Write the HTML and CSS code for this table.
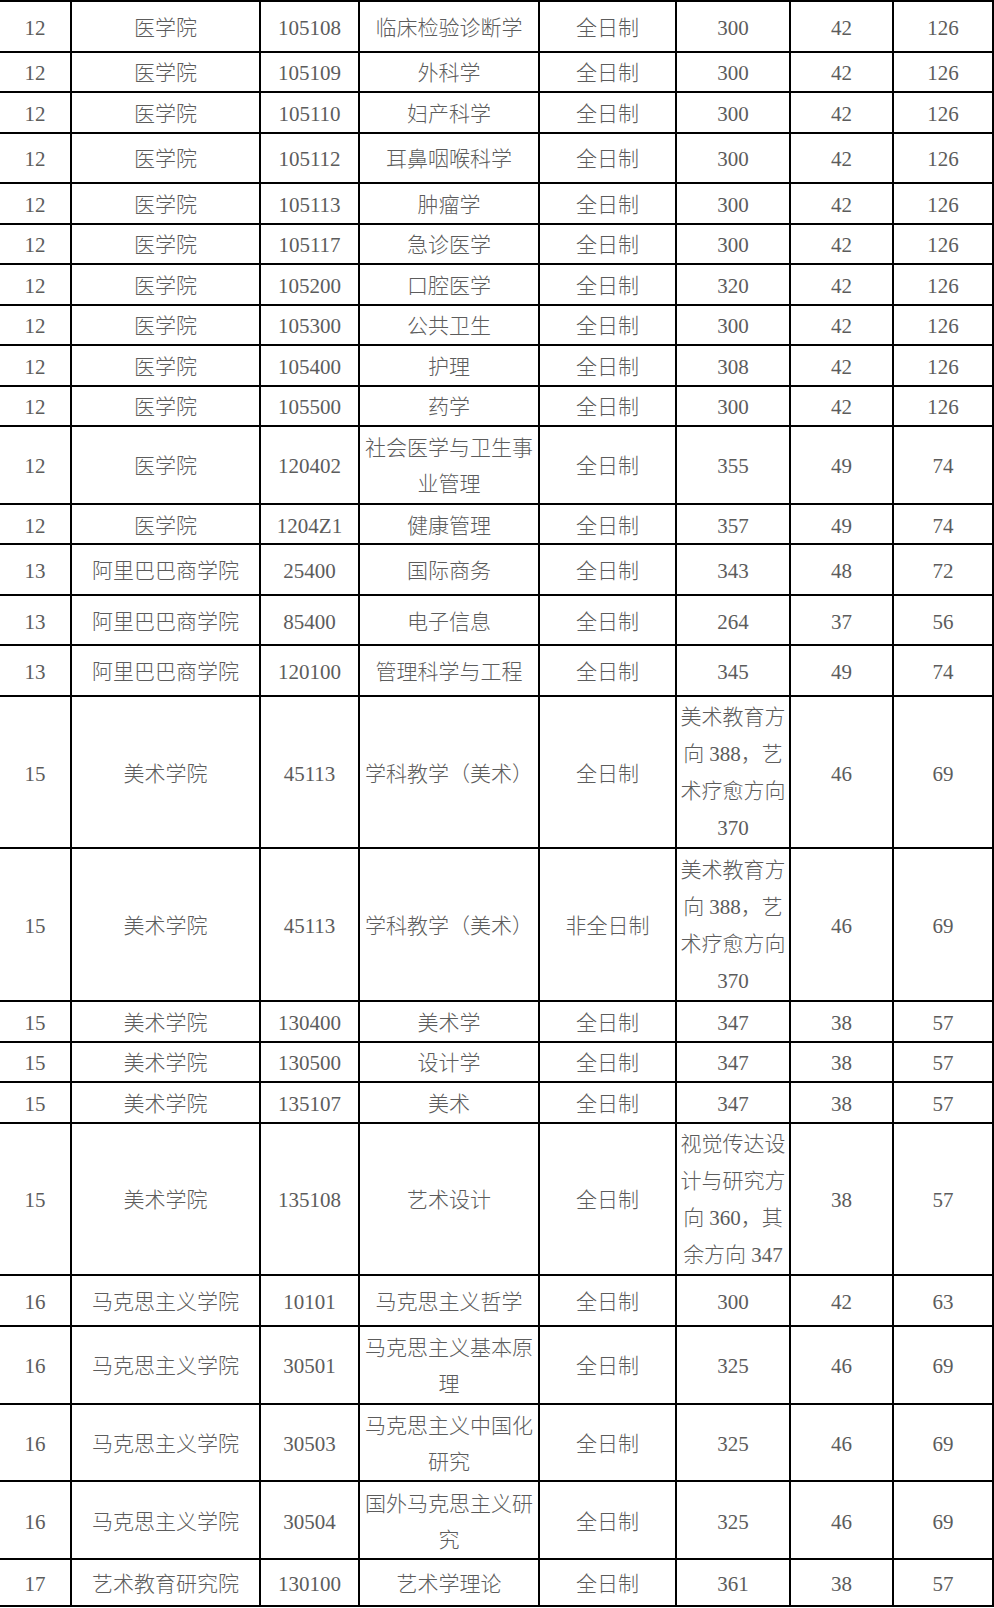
FILE: index.html
```html
<!DOCTYPE html>
<html lang="zh-CN">
<head>
<meta charset="utf-8">
<title>招生分数线</title>
<link rel="stylesheet" href="styles.css">
</head>
<body>
<table class="grid">
  <colgroup>
    <col class="c1"><col class="c2"><col class="c3"><col class="c4"><col class="c5"><col class="c6"><col class="c7"><col class="c8">
  </colgroup>
  <tbody>
    <tr class="m"><td>12</td><td>医学院</td><td>105108</td><td>临床检验诊断学</td><td>全日制</td><td>300</td><td>42</td><td>126</td></tr>
    <tr class="s"><td>12</td><td>医学院</td><td>105109</td><td>外科学</td><td>全日制</td><td>300</td><td>42</td><td>126</td></tr>
    <tr class="s"><td>12</td><td>医学院</td><td>105110</td><td>妇产科学</td><td>全日制</td><td>300</td><td>42</td><td>126</td></tr>
    <tr class="m"><td>12</td><td>医学院</td><td>105112</td><td>耳鼻咽喉科学</td><td>全日制</td><td>300</td><td>42</td><td>126</td></tr>
    <tr class="s"><td>12</td><td>医学院</td><td>105113</td><td>肿瘤学</td><td>全日制</td><td>300</td><td>42</td><td>126</td></tr>
    <tr class="s"><td>12</td><td>医学院</td><td>105117</td><td>急诊医学</td><td>全日制</td><td>300</td><td>42</td><td>126</td></tr>
    <tr class="s"><td>12</td><td>医学院</td><td>105200</td><td>口腔医学</td><td>全日制</td><td>320</td><td>42</td><td>126</td></tr>
    <tr class="s"><td>12</td><td>医学院</td><td>105300</td><td>公共卫生</td><td>全日制</td><td>300</td><td>42</td><td>126</td></tr>
    <tr class="s"><td>12</td><td>医学院</td><td>105400</td><td>护理</td><td>全日制</td><td>308</td><td>42</td><td>126</td></tr>
    <tr class="s"><td>12</td><td>医学院</td><td>105500</td><td>药学</td><td>全日制</td><td>300</td><td>42</td><td>126</td></tr>
    <tr class="d"><td>12</td><td>医学院</td><td>120402</td><td class="l2">社会医学与卫生事<br>业管理</td><td>全日制</td><td>355</td><td>49</td><td>74</td></tr>
    <tr class="s"><td>12</td><td>医学院</td><td>1204Z1</td><td>健康管理</td><td>全日制</td><td>357</td><td>49</td><td>74</td></tr>
    <tr class="m"><td>13</td><td>阿里巴巴商学院</td><td>25400</td><td>国际商务</td><td>全日制</td><td>343</td><td>48</td><td>72</td></tr>
    <tr class="m"><td>13</td><td>阿里巴巴商学院</td><td>85400</td><td>电子信息</td><td>全日制</td><td>264</td><td>37</td><td>56</td></tr>
    <tr class="m"><td>13</td><td>阿里巴巴商学院</td><td>120100</td><td>管理科学与工程</td><td>全日制</td><td>345</td><td>49</td><td>74</td></tr>
    <tr class="q"><td>15</td><td>美术学院</td><td>45113</td><td>学科教学（美术）</td><td>全日制</td><td class="l4">美术教育方<br>向 388，艺<br>术疗愈方向<br>370</td><td>46</td><td>69</td></tr>
    <tr class="q"><td>15</td><td>美术学院</td><td>45113</td><td>学科教学（美术）</td><td>非全日制</td><td class="l4">美术教育方<br>向 388，艺<br>术疗愈方向<br>370</td><td>46</td><td>69</td></tr>
    <tr class="s"><td>15</td><td>美术学院</td><td>130400</td><td>美术学</td><td>全日制</td><td>347</td><td>38</td><td>57</td></tr>
    <tr class="s"><td>15</td><td>美术学院</td><td>130500</td><td>设计学</td><td>全日制</td><td>347</td><td>38</td><td>57</td></tr>
    <tr class="s"><td>15</td><td>美术学院</td><td>135107</td><td>美术</td><td>全日制</td><td>347</td><td>38</td><td>57</td></tr>
    <tr class="q"><td>15</td><td>美术学院</td><td>135108</td><td>艺术设计</td><td>全日制</td><td class="l4">视觉传达设<br>计与研究方<br>向 360，其<br>余方向 347</td><td>38</td><td>57</td></tr>
    <tr class="m"><td>16</td><td>马克思主义学院</td><td>10101</td><td>马克思主义哲学</td><td>全日制</td><td>300</td><td>42</td><td>63</td></tr>
    <tr class="d"><td>16</td><td>马克思主义学院</td><td>30501</td><td class="l2">马克思主义基本原<br>理</td><td>全日制</td><td>325</td><td>46</td><td>69</td></tr>
    <tr class="d"><td>16</td><td>马克思主义学院</td><td>30503</td><td class="l2">马克思主义中国化<br>研究</td><td>全日制</td><td>325</td><td>46</td><td>69</td></tr>
    <tr class="d"><td>16</td><td>马克思主义学院</td><td>30504</td><td class="l2">国外马克思主义研<br>究</td><td>全日制</td><td>325</td><td>46</td><td>69</td></tr>
    <tr class="e"><td>17</td><td>艺术教育研究院</td><td>130100</td><td>艺术学理论</td><td>全日制</td><td>361</td><td>38</td><td>57</td></tr>
  </tbody>
</table>
</body>
</html>
```

FILE: styles.css
```css
html, body {
  margin: 0;
  padding: 0;
  background: #ffffff;
}

.grid {
  table-layout: fixed;
  width: 994px;
  border-collapse: separate;
  border-spacing: 0;
  border-top: 2px solid #000;
  font-family: "Liberation Serif", "Noto Sans CJK SC", serif;
  font-size: 21px;
  font-weight: 300;
  color: #5c5c5c;
}

.c1 { width: 72px; }
.c2 { width: 189px; }
.c3 { width: 99px; }
.c4 { width: 180px; }
.c5 { width: 137px; }
.c6 { width: 114px; }
.c7 { width: 103px; }
.c8 { width: 100px; }

.grid td {
  box-sizing: border-box;
  border-right: 2px solid #000;
  border-bottom: 2px solid #000;
  padding: 3px 1px 0;
  text-align: center;
  vertical-align: middle;
  line-height: 30px;
  white-space: nowrap;
  overflow: hidden;
}

.grid tr.s { height: 40.5px; }
.grid tr.m { height: 50.5px; }
.grid tr.d { height: 77.75px; }
.grid tr.q { height: 152.7px; }
.grid tr.e { height: 47px; }

.grid td.l2 { line-height: 36px; }
.grid td.l4 { line-height: 37px; padding-top: 2px; }
```
